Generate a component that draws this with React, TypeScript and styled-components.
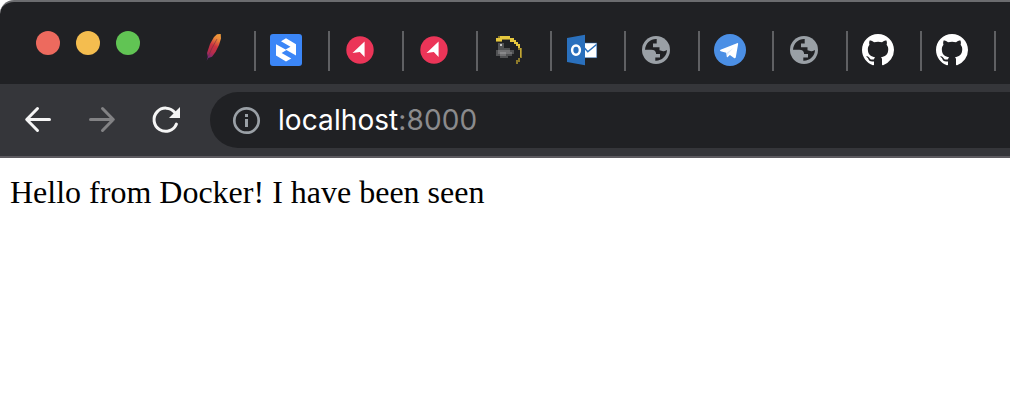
import React from "react";
import styled, { createGlobalStyle } from "styled-components";

const GlobalStyle = createGlobalStyle`
  * { box-sizing: border-box; }
  body { margin: 0; background: #fff; overflow: hidden; }
`;

const Window = styled.div`
  width: 100%;
  height: 420px;
  display: flex;
  flex-direction: column;
  background: #fff;
  overflow: hidden;
`;

const TabStrip = styled.header`
  height: 84px;
  flex: none;
  display: flex;
  align-items: flex-start;
  background: #202124;
  border-top: 2px solid #6b6c6f;
  border-top-left-radius: 14px;
  overflow: hidden;
`;

const TrafficLights = styled.div`
  width: 182px;
  flex: none;
  display: flex;
  gap: 16px;
  padding: 29px 0 0 36px;
`;

const Light = styled.span<{ $color: string }>`
  width: 24px;
  height: 24px;
  border-radius: 50%;
  background: ${(p) => p.$color};
`;

const Tab = styled.div`
  width: 74px;
  height: 40px;
  flex: none;
  margin-top: 29px;
  padding: 3px 0 0 14px;
  border-right: 2px solid #5f6063;
`;

const Icon = styled.svg`
  display: block;
  width: 32px;
  height: 32px;
  flex: none;
`;

const Toolbar = styled.nav`
  height: 74px;
  flex: none;
  display: flex;
  align-items: flex-start;
  padding: 8px 0 0 22px;
  background: #35363a;
  border-bottom: 2px solid #5d5b60;
`;

const NavButtons = styled.div`
  display: flex;
  gap: 32px;
  padding-top: 12px;
  width: 188px;
  flex: none;
`;

const AddressBar = styled.div`
  height: 56px;
  flex: 1;
  display: flex;
  align-items: center;
  padding-left: 20px;
  gap: 16px;
  background: #202124;
  border-radius: 28px 0 0 28px;
`;

const Url = styled.span`
  font: 400 28px/34px Inter, "Liberation Sans", sans-serif;
  letter-spacing: 0.08px;
  color: #fff;
  white-space: nowrap;
`;

const Port = styled.span`
  color: #8b8b8d;
`;

const Page = styled.main`
  padding: 16px 10px;
  font: 32px/37px "Liberation Serif", "Times New Roman", serif;
  color: #000;
`;

const Feather = () => (
  <Icon viewBox="0 0 32 32">
    <defs>
      <linearGradient id="feather" x1="24" y1="0" x2="10" y2="28" gradientUnits="userSpaceOnUse">
        <stop offset="0" stopColor="#f2a13b" />
        <stop offset=".2" stopColor="#e8833a" />
        <stop offset=".42" stopColor="#cc3440" />
        <stop offset=".65" stopColor="#b52c4c" />
        <stop offset=".85" stopColor="#76287c" />
        <stop offset="1" stopColor="#3c2350" />
      </linearGradient>
    </defs>
    <path d="M21 .2 24.7 0 25 4.5 23 11 19.5 18 16 22.7 12.4 24 10.6 27 9.7 30 11.8 23 11 19 14 10 18 3Z" fill="url(#feather)" />
    <path d="M21 5 15.5 15 12.5 22" stroke="#69303f" strokeWidth=".8" fill="none" opacity=".7" />
  </Icon>
);

const Blocks = () => (
  <Icon viewBox="0 0 32 32">
    <rect width="32" height="32" rx="3" fill="#3b86f7" />
    <path d="M11 7.2 16 4.3 26 10.3V21.5L15.5 15.6 20.5 12.7Z" fill="#fff" />
    <path d="M6 10.3 16.5 16.1 11.6 19 21.3 24.6 16 27.6 6 21.6Z" fill="#fff" />
  </Icon>
);

const Pointer = () => (
  <Icon viewBox="0 0 32 32">
    <circle cx="16" cy="16" r="13.7" fill="#eb3558" />
    <path d="M20.6 7.4V23L15.8 18.1 8.5 18.9Z" fill="#fff" />
  </Icon>
);

const Banana = () => (
  <Icon viewBox="0 0 32 32" shapeRendering="crispEdges">
    <path d="M4 8V4H6V2H18V4H22V6H24V8H26V10H28V14H30V24H28V28H26V30H24V26H26V24H28V16H26V12H24V10H22V8H18V6H10V8Z" fill="#8d7a2b" />
    <path d="M4 6V4H8V2H18V4H22V6H24V8H26V10H28V14H26V12H24V10H22V8H18V5H10V7H4Z" fill="#e6c83e" />
    <path d="M28 14H29V23H28Z" fill="#c3a735" />
    <path d="M6 9H12V14H18V16H22V20H20V22H16V24H8V22H4V16H6Z" fill="#515254" />
    <path d="M8 10H10V12H8Z" fill="#c4c4c4" />
    <path d="M6 16H18V18H20V20H14V22H8V20H6Z" fill="#717173" />
    <path d="M8 18H14V20H8Z" fill="#88888a" />
  </Icon>
);

const Outlook = () => (
  <Icon viewBox="0 0 32 32">
    <rect x="18" y="9" width="12.8" height="14.8" fill="#fff" stroke="#2a70bd" strokeWidth=".5" />
    <path d="M18 13.5 21.8 17.8 30.5 10.5" fill="none" stroke="#2a70bd" strokeWidth="1.5" />
    <path d="M1 4 19 .8V31.2L1 28Z" fill="#2a70bd" />
    <ellipse cx="10" cy="16.1" rx="3.9" ry="4.7" fill="none" stroke="#fff" strokeWidth="2.5" />
  </Icon>
);

const Globe = () => (
  <Icon viewBox="0 0 32 32">
    <circle cx="16" cy="16" r="14" fill="#9aa0a6" />
    <path d="M16.7 5.1C10.6 4.8 5.4 9.4 5 15.8H11.2C14.4 15.8 16.1 17.3 16.1 20.1H20V23.4H15.3V26.8C21.6 27.1 26.8 22.2 27 16.1C25.4 17.3 23.8 17.5 22.2 16.9L19.5 16.2V13.2H13V9.6H16.7Z" fill="#202124" />
  </Icon>
);

const Telegram = () => (
  <Icon viewBox="0 0 32 32">
    <circle cx="16" cy="16" r="16" fill="#4b8fe5" />
    <path d="M6.5 15.7 23 9.2Q24.4 8.7 24.1 10.2L21.8 23.3Q21.3 24.8 20 23.9L15.9 20.9 13.7 23Q12.8 23.7 12.7 22.3L12.2 18.7 6.7 17.2Q5.3 16.6 6.5 15.7Z" fill="#fff" />
    <path d="M12.9 18.6 19.8 13.8 14.5 19.2 13.6 22Z" fill="#dce9fa" />
  </Icon>
);

const Github = () => (
  <Icon viewBox="0 0 16 16">
    <path
      fill="#fff"
      d="M8 0C3.58 0 0 3.58 0 8c0 3.54 2.29 6.53 5.47 7.59.4.07.55-.17.55-.38 0-.19-.01-.82-.01-1.49-2.01.37-2.53-.49-2.69-.94-.09-.23-.48-.94-.82-1.13-.28-.15-.68-.52-.01-.53.63-.01 1.08.58 1.23.82.72 1.21 1.87.87 2.33.66.07-.52.28-.87.51-1.07-1.78-.2-3.64-.89-3.64-3.95 0-.87.31-1.59.82-2.15-.08-.2-.36-1.02.08-2.12 0 0 .67-.21 2.2.82.64-.18 1.32-.27 2-.27s1.36.09 2 .27c1.53-1.04 2.2-.82 2.2-.82.44 1.1.16 1.92.08 2.12.51.56.82 1.27.82 2.15 0 3.07-1.87 3.75-3.65 3.95.29.25.54.73.54 1.48 0 1.07-.01 1.93-.01 2.2 0 .21.15.46.55.38A8.01 8.01 0 0 0 16 8c0-4.42-3.58-8-8-8z"
    />
  </Icon>
);

const Back = () => (
  <Icon viewBox="0 0 32 32" fill="none" stroke="#f5f5f5" strokeWidth="3" strokeLinecap="round" strokeLinejoin="round">
    <path d="M27.5 15.5H5M15.5 4.5 4.7 15.5 15.5 26.5" />
  </Icon>
);

const Forward = () => (
  <Icon viewBox="0 0 32 32" fill="none" stroke="#828284" strokeWidth="3" strokeLinecap="round" strokeLinejoin="round">
    <path d="M4.5 15.5H27M16.5 4.5 27.3 15.5 16.5 26.5" />
  </Icon>
);

const Reload = () => (
  <Icon viewBox="0 0 32 32">
    <path d="M26.4 20.1A11.6 11.6 0 1 1 24.9 8.7" fill="none" stroke="#f5f5f5" strokeWidth="3" strokeLinecap="round" />
    <path d="M30 3V14H19Z" fill="#f5f5f5" />
  </Icon>
);

const Info = () => (
  <Icon viewBox="0 0 32 32">
    <circle cx="16.5" cy="16.5" r="12.2" fill="none" stroke="#9aa0a6" strokeWidth="2.7" />
    <path d="M15 10H18V13H15ZM15 15H18V23H15Z" fill="#9aa0a6" />
  </Icon>
);

const tabs = [Feather, Blocks, Pointer, Pointer, Banana, Outlook, Globe, Telegram, Globe, Github, Github];

export default function App() {
  return (
    <>
      <GlobalStyle />
      <Window>
        <TabStrip>
          <TrafficLights>
            <Light $color="#ed6a5e" />
            <Light $color="#f4bd4f" />
            <Light $color="#61c454" />
          </TrafficLights>
          {tabs.map((TabIcon, i) => (
            <Tab key={i}>
              <TabIcon />
            </Tab>
          ))}
        </TabStrip>
        <Toolbar>
          <NavButtons>
            <Back />
            <Forward />
            <Reload />
          </NavButtons>
          <AddressBar>
            <Info />
            <Url>
              localhost<Port>:8000</Port>
            </Url>
          </AddressBar>
        </Toolbar>
        <Page>Hello from Docker! I have been seen</Page>
      </Window>
    </>
  );
}
